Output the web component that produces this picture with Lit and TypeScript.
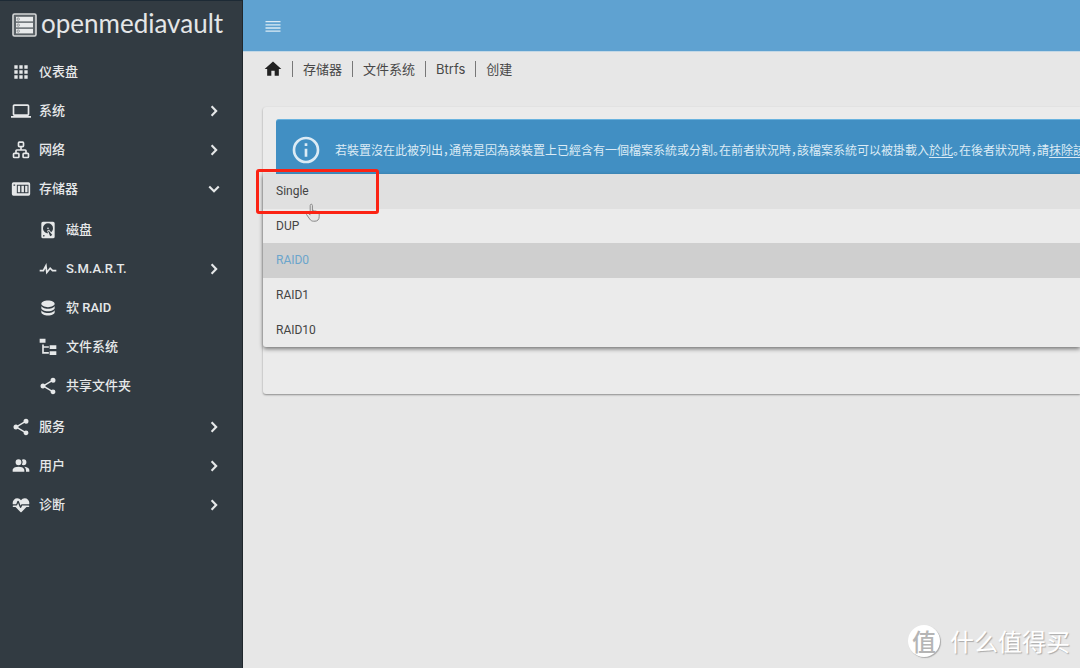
import { LitElement, html, css, svg, nothing } from "lit";
import { customElement, property, state } from "lit/decorators.js";
import { classMap } from "lit/directives/class-map.js";

const ICONS: Record<string, string> = {
  apps: "M16,20H20V16H16M16,14H20V10H16M10,8H14V4H10M16,8H20V4H16M10,14H14V10H10M4,14H8V10H4M4,20H8V16H4M10,20H14V16H10M4,8H8V4H4V8Z",
  laptop:
    "M4,6H20V16H4M20,18A2,2 0 0,0 22,16V6C22,4.89 21.1,4 20,4H4C2.89,4 2,4.89 2,6V16A2,2 0 0,0 4,18H0V20H24V18H20Z",
  lan: "M10,1.5A2,2 0 0,0 8,3.5V7A2,2 0 0,0 10,9H11V11H7A2,2 0 0,0 5,13V15H4A2,2 0 0,0 2,17V20A2,2 0 0,0 4,22H8.5A2,2 0 0,0 10.5,20V17A2,2 0 0,0 8.5,15H7V13H17V15H15.5A2,2 0 0,0 13.5,17V20A2,2 0 0,0 15.5,22H20A2,2 0 0,0 22,20V17A2,2 0 0,0 20,15H19V13A2,2 0 0,0 17,11H13V9H14A2,2 0 0,0 16,7V3.5A2,2 0 0,0 14,1.5H10M10,3.5H14V7H10V3.5M4,17H8.5V20H4V17M15.5,17H20V20H15.5V17Z",
  nas: "M3,4A2,2 0 0,0 1,6V18A2,2 0 0,0 3,20H21A2,2 0 0,0 23,18V6A2,2 0 0,0 21,4H3M7,7H21V17H7V7M3,6.5H5V8H3V6.5M8.2,8V16H11V8H8.2M12.5,8V16H15.5V8H12.5M17,8V16H19.8V8H17Z",
  harddisk:
    "M6,2H18A2,2 0 0,1 20,4V20A2,2 0 0,1 18,22H6A2,2 0 0,1 4,20V4A2,2 0 0,1 6,2M12,4A6,6 0 0,0 6,10C6,13.31 8.69,16 12.1,16L11.22,13.77C10.95,13.29 11.11,12.68 11.59,12.4L12.45,11.9C12.93,11.63 13.54,11.79 13.82,12.27L15.74,14.69C17.12,13.59 18,11.9 18,10A6,6 0 0,0 12,4M12,9A1,1 0 0,1 13,10A1,1 0 0,1 12,11A1,1 0 0,1 11,10A1,1 0 0,1 12,9M7,18A1,1 0 0,0 6,19A1,1 0 0,0 7,20A1,1 0 0,0 8,19A1,1 0 0,0 7,18M12.09,13.27L14.58,19.58L17.17,18.08L12.95,12.77L12.09,13.27Z",
  pulse:
    "M2,13H5.79L10.1,4.79L11.28,13.75L14.5,9.66L17.83,13H22V15H17L14.67,12.67L9.92,18.73L8.94,11.31L7,15H2V13Z",
  database:
    "M12,3C7.58,3 4,4.79 4,7C4,9.21 7.58,11 12,11C16.42,11 20,9.21 20,7C20,4.79 16.42,3 12,3M4,9V12C4,14.21 7.58,16 12,16C16.42,16 20,14.21 20,12V9C20,11.21 16.42,13 12,13C7.58,13 4,11.21 4,9M4,14V17C4,19.21 7.58,21 12,21C16.42,21 20,19.21 20,17V14C20,16.21 16.42,18 12,18C7.58,18 4,16.21 4,14Z",
  tree: "M2,2H9V7H2V2M14,10H22V14.5H14V10M14,17H22V21.5H14V17M13,13H7V18H13V20H7L5,20V9H7V11H13V13Z",
  share:
    "M18,16.08C17.24,16.08 16.56,16.38 16.04,16.85L8.91,12.7C8.96,12.47 9,12.24 9,12C9,11.76 8.96,11.53 8.91,11.3L15.96,7.19C16.5,7.69 17.21,8 18,8A3,3 0 0,0 21,5A3,3 0 0,0 18,2A3,3 0 0,0 15,5C15,5.24 15.04,5.47 15.09,5.7L8.04,9.81C7.5,9.31 6.79,9 6,9A3,3 0 0,0 3,12A3,3 0 0,0 6,15C6.79,15 7.5,14.69 8.04,14.19L15.16,18.34C15.11,18.55 15.08,18.77 15.08,19C15.08,20.61 16.39,21.91 18,21.91C19.61,21.91 20.92,20.61 20.92,19A2.92,2.92 0 0,0 18,16.08Z",
  users:
    "M16 17V19H2V17S2 13 9 13 16 17 16 17M12.5 7.5A3.5 3.5 0 1 0 9 11A3.5 3.5 0 0 0 12.5 7.5M15.94 13A5.32 5.32 0 0 1 18 17V19H22V17S22 13.37 15.94 13M15 4A3.39 3.39 0 0 0 13.07 4.59A5 5 0 0 1 13.07 10.41A3.39 3.39 0 0 0 15 11A3.5 3.5 0 0 0 15 4Z",
  heart:
    "M7.5,4A5.5,5.5 0 0,0 2,9.5C2,10 2.09,10.5 2.22,11H6.3L7.57,7.63C7.87,6.83 9.05,6.75 9.43,7.63L11.5,13L12.09,11.58C12.22,11.25 12.57,11 13,11H21.78C21.91,10.5 22,10 22,9.5A5.5,5.5 0 0,0 16.5,4C14.64,4 13,4.93 12,6.34C11,4.93 9.36,4 7.5,4V4M3,12.5A1,1 0 0,0 2,13.5A1,1 0 0,0 3,14.5H5.44L11,20C12,20.9 12,20.9 13,20L18.56,14.5H21A1,1 0 0,0 22,13.5A1,1 0 0,0 21,12.5H13.4L12.47,14.8C12.07,15.81 10.92,15.67 10.55,14.83L8.5,9.5L7.54,11.83C7.39,12.21 7.05,12.5 6.6,12.5H3Z",
  right: "M8.2,16.8L12.8,12L8.2,7.2L10,5.4L16.4,12L10,18.6L8.2,16.8Z",
  down: "M7.2,8.2L12,12.8L16.8,8.2L18.6,10L12,16.4L5.4,10L7.2,8.2Z",
  home: "M10,20V14H14V20H19V12H22L12,3L2,12H5V20H10Z",
  menu: "M3,6H21V7.6H3V6M3,9.8H21V11.4H3V9.8M3,13.6H21V15.2H3V13.6M3,17.4H21V19H3V17.4Z",
  info: "M11,9H13V7H11M12,20C7.59,20 4,16.41 4,12C4,7.59 7.59,4 12,4C16.41,4 20,7.59 20,12C20,16.41 16.41,20 12,20M12,2A10,10 0 1,0 22,12 10,10 0 0,0 12,2M11,17H13V11H11V17Z",
};

@customElement("omv-icon")
class OmvIcon extends LitElement {
  static styles = css`
    :host {
      display: block;
      flex: none;
      width: 20px;
      height: 20px;
    }
    .glyph {
      display: block;
      width: 100%;
      height: 100%;
      fill: currentColor;
      fill-rule: evenodd;
    }
  `;
  @property() name = "";
  render() {
    return html`<svg class="glyph" viewBox="0 0 24 24" aria-hidden="true">
      ${svg`<path d=${ICONS[this.name] ?? ""}></path>`}
    </svg>`;
  }
}

interface NavItem {
  icon: string;
  label: string;
  expandable?: boolean;
  children?: NavItem[];
}

const NAV: NavItem[] = [
  { icon: "apps", label: "仪表盘" },
  { icon: "laptop", label: "系统", expandable: true },
  { icon: "lan", label: "网络", expandable: true },
  {
    icon: "nas",
    label: "存储器",
    expandable: true,
    children: [
      { icon: "harddisk", label: "磁盘" },
      { icon: "pulse", label: "S.M.A.R.T.", expandable: true },
      { icon: "database", label: "软 RAID" },
      { icon: "tree", label: "文件系统" },
      { icon: "share", label: "共享文件夹" },
    ],
  },
  { icon: "share", label: "服务", expandable: true },
  { icon: "users", label: "用户", expandable: true },
  { icon: "heart", label: "诊断", expandable: true },
];

@customElement("omv-sidebar")
class OmvSidebar extends LitElement {
  static styles = css`
    :host {
      display: block;
      box-sizing: border-box;
      background: #323b42;
      color: #e6e8e9;
      border-top: 1px solid #1d2a35;
      border-right: 1px solid #20272c;
    }
    .brand {
      display: flex;
      align-items: center;
      gap: 4px;
      height: 48px;
      padding: 0 12px;
      margin-bottom: 3px;
      color: #e4e6e7;
      text-decoration: none;
      font: 400 26px/32px Lato, "Open Sans", sans-serif;
    }
    .mark {
      flex: none;
      width: 25px;
      height: 24px;
    }
    .name {
      padding-bottom: 4px;
    }
    .list {
      list-style: none;
      margin: 0;
      padding: 0;
    }
    .sub {
      padding: 2px 0;
    }
    .row {
      display: flex;
      align-items: center;
      gap: 8px;
      width: 100%;
      height: 39px;
      padding: 0 18px 0 11px;
      border: 0;
      background: none;
      color: inherit;
      font: 500 13px/20px Roboto, "Noto Sans CJK SC", sans-serif;
      text-align: left;
      cursor: pointer;
    }
    .sub .row {
      padding-left: 38px;
    }
    .label {
      flex: 1;
    }
  `;
  renderItem(item: NavItem): unknown {
    const open = !!item.children;
    return html`<li>
      <button class="row" aria-expanded=${item.expandable ? String(open) : nothing}>
        <omv-icon name=${item.icon}></omv-icon>
        <span class="label">${item.label}</span>
        ${item.expandable
          ? html`<omv-icon name=${open ? "down" : "right"}></omv-icon>`
          : nothing}
      </button>
      ${open
        ? html`<ul class="list sub">
            ${item.children!.map((c) => this.renderItem(c))}
          </ul>`
        : nothing}
    </li>`;
  }
  render() {
    return html`
      <a class="brand" href="#">
        <svg class="mark" viewBox="0 0 25 24" aria-hidden="true">
          <rect x="1" y="1" width="23" height="22" rx="1.5" fill="#5b6267" stroke="#d5d7d8" stroke-width="1.6" />
          <g fill="#e8eaeb">
            <rect x="4" y="3.8" width="17" height="4.6" />
            <rect x="4" y="9.8" width="17" height="4.6" />
            <rect x="4" y="15.8" width="17" height="4.6" />
          </g>
          <g fill="none" stroke="#7d8387" stroke-width="0.8">
            <circle cx="6.2" cy="6.1" r="1.2" />
            <circle cx="6.2" cy="12.1" r="1.2" />
            <circle cx="6.2" cy="18.1" r="1.2" />
          </g>
        </svg>
        <span class="name">openmediavault</span>
      </a>
      <nav><ul class="list">${NAV.map((i) => this.renderItem(i))}</ul></nav>
    `;
  }
}

@customElement("omv-profile-menu")
class OmvProfileMenu extends LitElement {
  static styles = css`
    :host {
      display: block;
    }
    .panel {
      display: grid;
      grid-auto-rows: 1fr;
      height: 173px;
      background: #ebebeb;
      border-radius: 0 0 0 3px;
      box-shadow: 0 2px 4px rgba(0, 0, 0, 0.5);
      overflow: hidden;
    }
    .option {
      padding: 0 13px;
      border: 0;
      background: none;
      color: #444;
      font: 400 12px/16px Roboto, sans-serif;
      text-align: left;
      cursor: pointer;
    }
    .hover {
      background: #e0e0e0;
    }
    .selected {
      background: #cfcfcf;
      color: #6ba5cc;
    }
  `;
  @state() private value = "RAID0";
  render() {
    return html`<div class="panel" role="listbox">
      ${["Single", "DUP", "RAID0", "RAID1", "RAID10"].map(
        (name) => html`<button
          role="option"
          aria-selected=${String(name === this.value)}
          class=${classMap({
            option: true,
            hover: name === "Single",
            selected: name === this.value,
          })}
          @click=${() => (this.value = name)}
        >
          ${name}
        </button>`
      )}
    </div>`;
  }
}

@customElement("app-root")
class AppRoot extends LitElement {
  static styles = css`
    :host {
      display: grid;
      grid-template-columns: 243px minmax(0, 1fr);
      min-height: 100vh;
      position: relative;
      overflow: hidden;
      background: #e7e7e7;
      font-family: Inter, "Noto Sans CJK SC", sans-serif;
    }
    .topbar {
      display: flex;
      align-items: center;
      height: 52px;
      padding: 0 20px;
      background: #5fa2d1;
      border-bottom: 1px solid #c3d8e6;
      box-sizing: border-box;
    }
    .toggle {
      padding: 0;
      border: 0;
      background: none;
      color: #dcebf5;
      cursor: pointer;
    }
    .crumbs {
      display: flex;
      align-items: center;
      height: 33px;
      padding: 0 20px;
      color: #484848;
      font-size: 13px;
      line-height: 16px;
    }
    .crumb {
      color: inherit;
      text-decoration: none;
      padding: 0 10px;
      border-left: 1px solid #777;
    }
    .home {
      color: #222;
      margin-right: 9px;
    }
    .card {
      position: relative;
      box-sizing: border-box;
      min-height: 287px;
      margin: 22px 0 0 20px;
      padding: 12px 0 0 13px;
      background: #ebebeb;
      border-radius: 3px 0 0 3px;
      box-shadow: 0 1px 2px rgba(0, 0, 0, 0.4);
    }
    .notice {
      display: flex;
      align-items: center;
      gap: 13px;
      height: 60px;
      padding: 0 14px;
      background: #418fc3;
      border-top: 1px solid #69b3df;
      border-radius: 3px 0 0 3px;
      box-sizing: border-box;
      color: #dcebf5;
      font-size: 12px;
      line-height: 18px;
      font-feature-settings: "halt";
      font-family: "Noto Sans CJK SC", sans-serif;
      white-space: nowrap;
      overflow: hidden;
    }
    .notice omv-icon {
      width: 32px;
      height: 32px;
    }
    .message {
      margin: 0;
    }
    .link {
      color: inherit;
      text-underline-offset: 2px;
    }
    .menu {
      position: absolute;
      top: 67px;
      left: 0;
      right: 0;
    }
    .highlight {
      position: absolute;
      left: 256px;
      top: 169px;
      width: 123px;
      height: 45px;
      box-sizing: border-box;
      border: 3px solid #fb2314;
      border-radius: 3px;
      pointer-events: none;
    }
    .pointer {
      position: absolute;
      left: 305px;
      top: 203px;
      width: 16px;
      height: 19px;
      pointer-events: none;
    }
    .watermark {
      position: absolute;
      right: 10px;
      bottom: 11px;
      display: flex;
      align-items: center;
      gap: 10px;
      color: #fff;
      font: 400 24px/32px "Noto Sans CJK SC", sans-serif;
      text-shadow: 1px 1px 1px #aaa;
    }
    .seal {
      width: 32px;
      height: 32px;
      border-radius: 50%;
      background: #fff;
      color: #b5b5b5;
      box-shadow: 1px 1px 1px #aaa;
      text-align: center;
      text-shadow: none;
      font-weight: 500;
    }
  `;
  render() {
    return html`
      <omv-sidebar></omv-sidebar>
      <main>
        <header class="topbar">
          <button class="toggle" aria-label="菜单"><omv-icon name="menu"></omv-icon></button>
        </header>
        <nav class="crumbs">
          <a class="home" href="#" aria-label="首页"><omv-icon name="home"></omv-icon></a>
          ${["存储器", "文件系统", "Btrfs", "创建"].map(
            (c) => html`<a class="crumb" href="#">${c}</a>`
          )}
        </nav>
        <section class="card">
          <div class="notice">
            <omv-icon name="info"></omv-icon>
            <p class="message">若裝置沒在此被列出，通常是因為該裝置上已經含有一個檔案系統或分割。在前者狀況時，該檔案系統可以被掛載入<a class="link" href="#">於此</a>。在後者狀況時，請<a class="link" href="#">抹除該</a></p>
          </div>
          <omv-profile-menu class="menu"></omv-profile-menu>
        </section>
      </main>
      <svg class="pointer" viewBox="0 0 16 19" aria-hidden="true">
        <path
          d="M5.2,11.5V2.5C5.2,0.8 7.4,0.8 7.4,2.5V8C8,7 9.6,7.2 9.7,8.4C10.4,7.6 11.9,7.9 12,9.1C12.8,8.5 14.2,8.9 14.2,10.3V13.5C14.2,16.5 12.5,18.2 10,18.2H8.5C6.8,18.2 5.6,17.4 4.7,16L1.5,11.5C0.9,10.3 2.4,9.4 3.4,10.3L5.2,12"
          fill="#e6e6e6" stroke="#888" stroke-width="1" stroke-linejoin="round" />
      </svg>
      <div class="highlight"></div>
      <div class="watermark"><span class="seal">值</span><span>什么值得买</span></div>
    `;
  }
}
